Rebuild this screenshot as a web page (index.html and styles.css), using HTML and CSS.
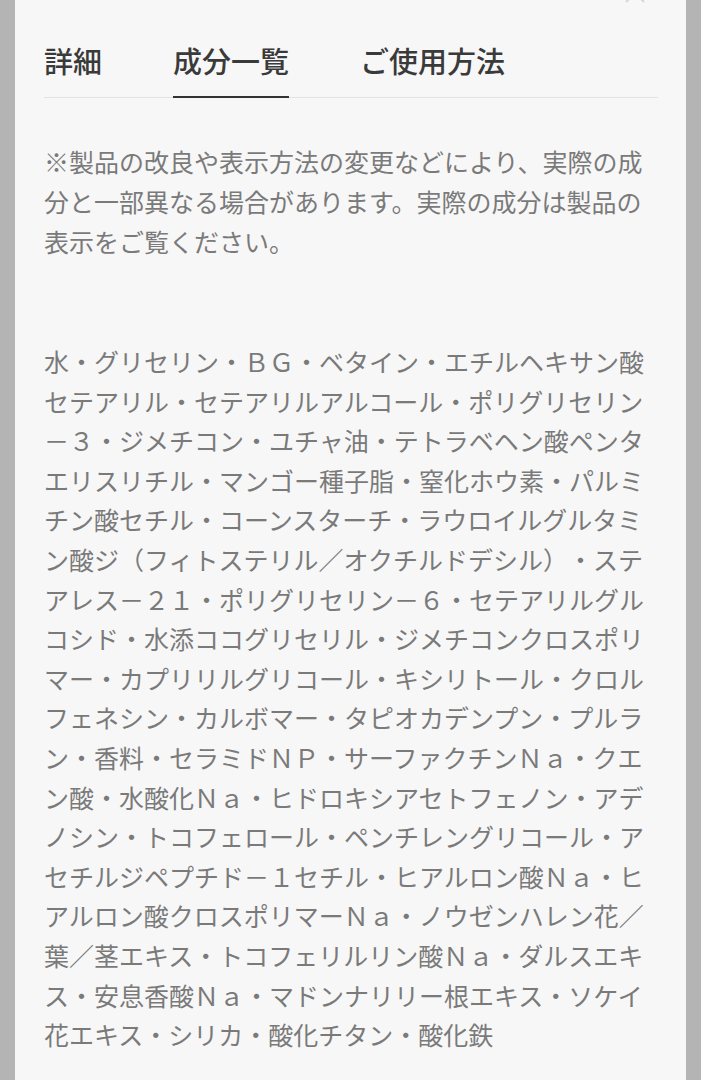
FILE: index.html
```html
<!DOCTYPE html>
<html>
    <head>
        <meta charset="utf-8">
        <title>成分一覧</title>
        <link rel="stylesheet" href="styles.css">
    </head>
    <body>
        <div class="panel">
            <svg class="close" width="22" height="22" viewBox="0 0 22 22">
                <path d="M2 2L20 20M20 2L2 20" stroke="#d6d6d6" stroke-width="2" fill="none"/>
            </svg>
            <ul class="tabs">
                <li class="tab">詳細</li>
                <li class="tab active">成分一覧</li>
                <li class="tab">ご使用方法</li>
            </ul>
            <p class="note">※製品の改良や表示方法の変更などにより、実際の成分と一部異なる場合があります。実際の成分は製品の表示をご覧ください。</p>
            <p class="list">水・グリセリン・ＢＧ・ベタイン・エチルヘキサン酸セテアリル・セテアリルアルコール・ポリグリセリン－３・ジメチコン・ユチャ油・テトラベヘン酸ペンタエリスリチル・マンゴー種子脂・窒化ホウ素・パルミチン酸セチル・コーンスターチ・ラウロイルグルタミン酸ジ（フィトステリル／オクチルドデシル）・ステアレス－２１・ポリグリセリン－６・セテアリルグルコシド・水添ココグリセリル・ジメチコンクロスポリマー・カプリリルグリコール・キシリトール・クロルフェネシン・カルボマー・タピオカデンプン・プルラン・香料・セラミドＮＰ・サーファクチンＮａ・クエン酸・水酸化Ｎａ・ヒドロキシアセトフェノン・アデノシン・トコフェロール・ペンチレングリコール・アセチルジペプチド－１セチル・ヒアルロン酸Ｎａ・ヒアルロン酸クロスポリマーＮａ・ノウゼンハレン花／葉／茎エキス・トコフェリルリン酸Ｎａ・ダルスエキス・安息香酸Ｎａ・マドンナリリー根エキス・ソケイ花エキス・シリカ・酸化チタン・酸化鉄</p>
        </div>
    </body>
</html>
```

FILE: styles.css
```css
*{
    margin:0;
    padding:0;
}
html,body{
    height:100%;
}
body{
    background-color:#b4b4b4;
    font-family:"Noto Sans CJK JP","Noto Sans",sans-serif;
}
.panel{
    position:relative;
    margin:0 15px;
    min-height:100%;
    padding:0 28px 0 29px;
    background-color:#f7f7f7;
    overflow:hidden;
}
.close{
    position:absolute;
    top:-18px;
    left:609px;
}
.tabs{
    list-style:none;
    display:flex;
    gap:71px;
    border-bottom:1px solid #e3e3e3;
}
.tab{
    padding:40px 0 16px;
    margin-bottom:-1px;
    font-size:29px;
    line-height:40px;
    font-weight:500;
    color:#3a3a3a;
    border-bottom:2px solid transparent;
}
.tab.active{
    border-bottom-color:#333;
}
.note,
.list{
    font-size:25px;
    color:#7a7a7a;
    line-break:anywhere;
    text-spacing-trim:space-all;
}
.note{
    margin-top:43px;
    line-height:40px;
}
.list{
    margin-top:81px;
    line-height:39.6px;
}
```
